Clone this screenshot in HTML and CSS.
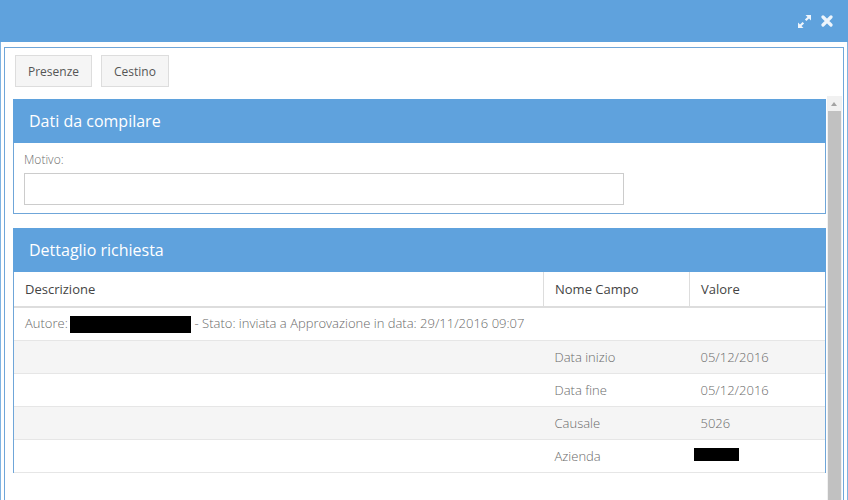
FILE: index.html
```html
<!DOCTYPE html>
<html lang="it">
<head>
<meta charset="utf-8">
<title>Richiesta</title>
<link rel="stylesheet" href="styles.css">
</head>
<body>
<div class="titlebar">
  <svg class="tb-icon" width="15" height="15" viewBox="0 0 15 15" aria-hidden="true">
    <path d="M8.5 1H14v5.5l-2-2-2.6 2.6-1.5-1.5 2.6-2.6z M6.5 14H1V8.5l2 2 2.6-2.6 1.5 1.5-2.6 2.6z" fill="#eef5fc"/>
  </svg>
  <svg class="tb-icon" width="12" height="12" viewBox="0 0 12 12" aria-hidden="true">
    <path d="M2 2l8 8M10 2l-8 8" stroke="#eef5fc" stroke-width="3.2" stroke-linecap="round"/>
  </svg>
</div>
<div class="window">
  <div class="frame">
    <div class="toolbar">
      <button class="btn">Presenze</button>
      <button class="btn">Cestino</button>
    </div>
    <div class="scroller">
      <div class="content">
        <section class="panel">
          <h2 class="panel-head">Dati da compilare</h2>
          <div class="panel-body">
            <label class="field-label">Motivo:</label>
            <div class="input"></div>
          </div>
        </section>
        <section class="panel panel-open">
          <h2 class="panel-head">Dettaglio richiesta</h2>
          <table class="grid">
            <thead>
              <tr><th class="c1">Descrizione</th><th class="c2">Nome Campo</th><th class="c3">Valore</th></tr>
            </thead>
            <tbody>
              <tr><td colspan="3">Autore: <span class="redact redact-name"></span> - Stato: inviata a Approvazione in data: 29/11/2016 09:07</td></tr>
              <tr class="alt"><td></td><td>Data inizio</td><td>05/12/2016</td></tr>
              <tr><td></td><td>Data fine</td><td>05/12/2016</td></tr>
              <tr class="alt"><td></td><td>Causale</td><td>5026</td></tr>
              <tr><td></td><td>Azienda</td><td><span class="redact redact-company"></span></td></tr>
            </tbody>
          </table>
        </section>
      </div>
      <div class="scrollbar">
        <div class="sb-arrow"></div>
        <div class="sb-thumb"></div>
      </div>
    </div>
  </div>
</div>
</body>
</html>
```

FILE: styles.css
```css
html, body {
  margin: 0;
  padding: 0;
  height: 100%;
  overflow: hidden;
  background: #ffffff;
  font-family: "Open Sans", "Noto Sans", sans-serif;
}

.titlebar {
  height: 42px;
  background: #5fa2dd;
  display: flex;
  justify-content: flex-end;
  align-items: center;
  gap: 9px;
  padding-right: 15px;
  box-sizing: border-box;
}

.tb-icon {
  display: block;
}

.window {
  height: 458px;
  box-sizing: border-box;
  border-left: 1px solid #7fb3e2;
  border-right: 1px solid #7fb3e2;
  padding: 5px 3px 0 3px;
  overflow: hidden;
}

.frame {
  height: 100%;
  box-sizing: border-box;
  border: 1px solid #6fa6d9;
  border-bottom: none;
  padding: 7px 1px 0 8px;
  display: flex;
  flex-direction: column;
}

.toolbar {
  display: flex;
  gap: 9px;
  padding-left: 2px;
  height: 32px;
  margin-bottom: 6px;
}

.btn {
  font-family: "Open Sans", "Noto Sans", sans-serif;
  font-size: 12px;
  color: #555;
  background: #f5f5f5;
  border: 1px solid #dddddd;
  border-radius: 0;
  padding: 0 12px;
  height: 32px;
  margin: 0;
}

.scroller {
  flex: 1;
  display: flex;
  min-height: 0;
}

.content {
  flex: 1;
  padding-top: 6px;
  min-width: 0;
}

.scrollbar {
  width: 15px;
  margin-left: 1px;
  margin-top: 3px;
  background: #f1f1f1;
  display: flex;
  flex-direction: column;
}

.sb-arrow {
  height: 15px;
  position: relative;
}

.sb-arrow::after {
  content: "";
  position: absolute;
  left: 4px;
  top: 6px;
  border-left: 3px solid transparent;
  border-right: 3px solid transparent;
  border-bottom: 4px solid #a3a3a3;
}

.sb-thumb {
  flex: 1;
  margin: 0 1px;
  background: #c1c1c1;
}

.panel {
  border: 1px solid #6fa6d9;
  border-top: none;
  margin-bottom: 14px;
}

.panel-open {
  border-bottom: none;
  margin-bottom: 0;
}

.panel-head {
  margin: 0 -1px;
  height: 44px;
  background: #5fa2dd;
  color: #ffffff;
  font-size: 16px;
  font-weight: 400;
  line-height: 44px;
  padding-left: 16px;
}

.panel-body {
  padding: 9px 10px 8px 10px;
}

.field-label {
  display: block;
  font-size: 12px;
  font-weight: 300;
  color: #6e6e6e;
  line-height: 16px;
  margin-bottom: 5px;
}

.input {
  width: 600px;
  height: 32px;
  box-sizing: border-box;
  border: 1px solid #cccccc;
  background: #fff;
}

.grid {
  width: 100%;
  border-collapse: collapse;
  font-size: 13px;
  table-layout: fixed;
}

.grid th {
  text-align: left;
  font-weight: 400;
  color: #444;
  height: 34px;
  padding: 0 10px 0 11px;
  border-bottom: 2px solid #dddddd;
  border-left: 1px solid #dddddd;
}

.grid th.c1 {
  border-left: none;
  width: 508px;
}

.grid th.c2 {
  width: 124px;
}

.grid td {
  height: 32px;
  padding: 0 10px 0 11px;
  color: #6a6a6a;
  font-weight: 300;
  border-bottom: 1px solid #e6e6e6;
  white-space: nowrap;
  overflow: visible;
}

.grid tr.alt td {
  background: #f5f5f5;
}

.redact {
  display: inline-block;
  background: #000;
  vertical-align: middle;
}

.redact-name {
  width: 121px;
  height: 17px;
  margin-left: -1px;
  position: relative;
  top: -1px;
}

.redact-company {
  width: 45px;
  height: 13px;
  margin-left: -7px;
  position: relative;
  top: -3px;
}
```
